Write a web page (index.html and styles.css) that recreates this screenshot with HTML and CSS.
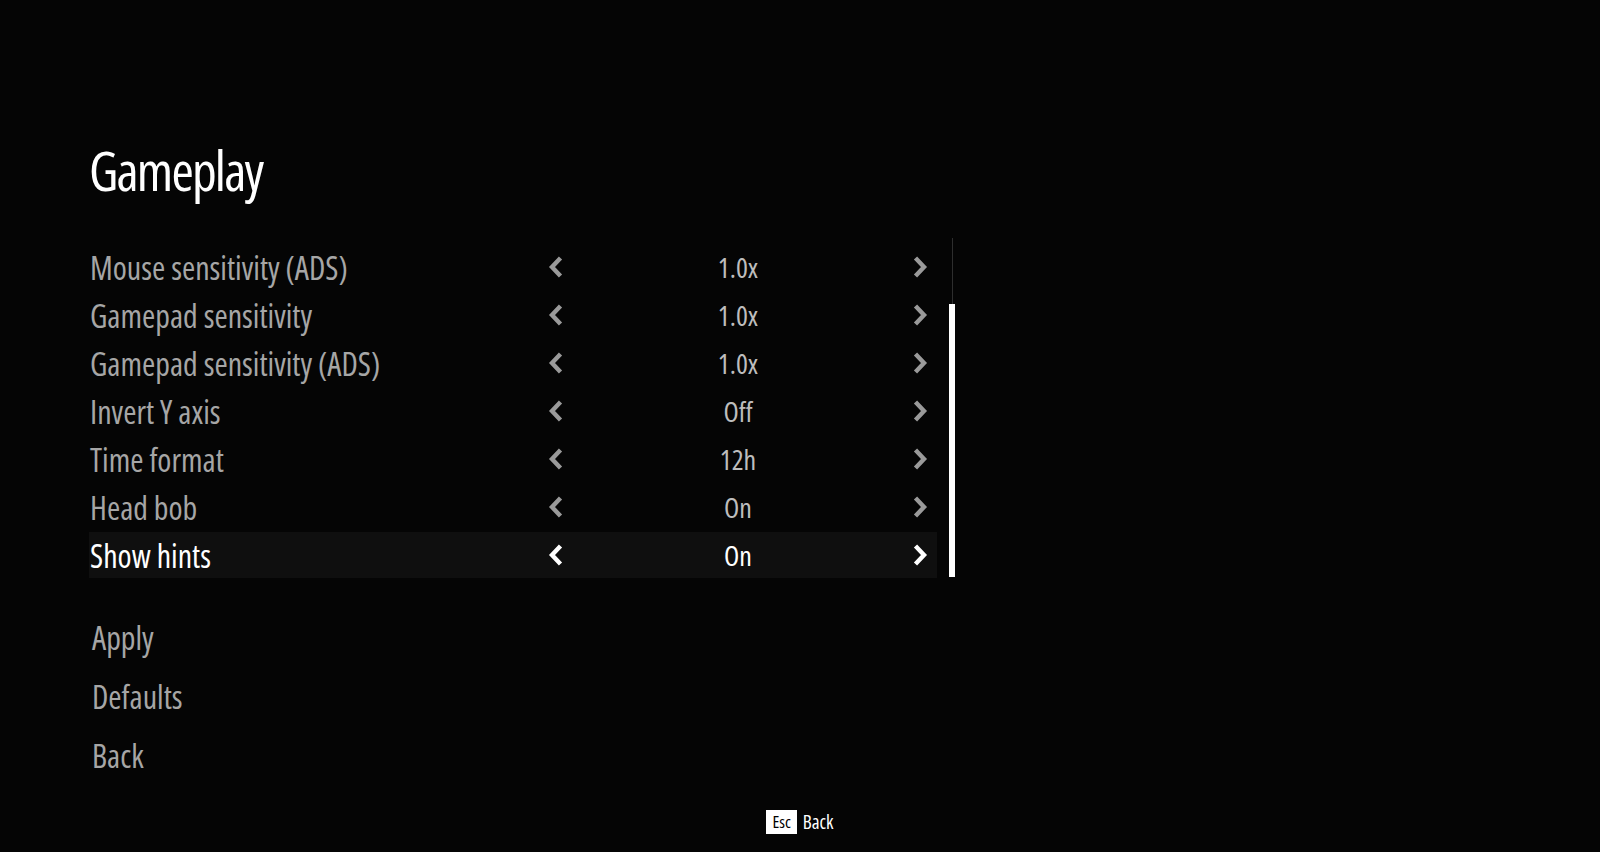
FILE: index.html
```html
<!DOCTYPE html>
<html>
<head>
<meta charset="utf-8">
<link rel="stylesheet" href="styles.css">
</head>
<body>
<div class="page">
  <h1 class="title">Gameplay</h1>
  <div class="settings">
    <div class="list">
      <div class="row"><span class="label">Mouse sensitivity (ADS)</span><span class="chev"><svg viewBox="0 0 18 24" width="18" height="24"><polyline points="13.5,3 5,12 13.5,21"/></svg></span><span class="value">1.0x</span><span class="chev"><svg viewBox="0 0 18 24" width="18" height="24"><polyline points="4.5,3 13,12 4.5,21"/></svg></span></div>
      <div class="row"><span class="label">Gamepad sensitivity</span><span class="chev"><svg viewBox="0 0 18 24" width="18" height="24"><polyline points="13.5,3 5,12 13.5,21"/></svg></span><span class="value">1.0x</span><span class="chev"><svg viewBox="0 0 18 24" width="18" height="24"><polyline points="4.5,3 13,12 4.5,21"/></svg></span></div>
      <div class="row"><span class="label">Gamepad sensitivity (ADS)</span><span class="chev"><svg viewBox="0 0 18 24" width="18" height="24"><polyline points="13.5,3 5,12 13.5,21"/></svg></span><span class="value">1.0x</span><span class="chev"><svg viewBox="0 0 18 24" width="18" height="24"><polyline points="4.5,3 13,12 4.5,21"/></svg></span></div>
      <div class="row"><span class="label">Invert Y axis</span><span class="chev"><svg viewBox="0 0 18 24" width="18" height="24"><polyline points="13.5,3 5,12 13.5,21"/></svg></span><span class="value">Off</span><span class="chev"><svg viewBox="0 0 18 24" width="18" height="24"><polyline points="4.5,3 13,12 4.5,21"/></svg></span></div>
      <div class="row"><span class="label">Time format</span><span class="chev"><svg viewBox="0 0 18 24" width="18" height="24"><polyline points="13.5,3 5,12 13.5,21"/></svg></span><span class="value">12h</span><span class="chev"><svg viewBox="0 0 18 24" width="18" height="24"><polyline points="4.5,3 13,12 4.5,21"/></svg></span></div>
      <div class="row"><span class="label">Head bob</span><span class="chev"><svg viewBox="0 0 18 24" width="18" height="24"><polyline points="13.5,3 5,12 13.5,21"/></svg></span><span class="value">On</span><span class="chev"><svg viewBox="0 0 18 24" width="18" height="24"><polyline points="4.5,3 13,12 4.5,21"/></svg></span></div>
      <div class="row active"><span class="label">Show hints</span><span class="chev"><svg viewBox="0 0 18 24" width="18" height="24"><polyline points="13.5,3 5,12 13.5,21"/></svg></span><span class="value">On</span><span class="chev"><svg viewBox="0 0 18 24" width="18" height="24"><polyline points="4.5,3 13,12 4.5,21"/></svg></span></div>
    </div>
    <div class="scrollbar"><div class="track"></div><div class="thumb"></div></div>
  </div>
  <div class="actions">
    <div class="action">Apply</div>
    <div class="action">Defaults</div>
    <div class="action">Back</div>
  </div>
  <div class="footer"><span class="key">Esc</span><span class="hint">Back</span></div>
</div>
</body>
</html>
```

FILE: styles.css
```css
html, body {
  margin: 0;
  padding: 0;
  background: #050505;
}
body {
  font-family: "Open Sans", "DejaVu Sans Condensed", sans-serif;
  font-stretch: 75%;
  font-weight: 500;
  color: #a6a6a6;
  width: 1600px;
  height: 852px;
  overflow: hidden;
}
.page {
  padding: 138px 0 0 89px;
  display: flex;
  flex-direction: column;
  height: 852px;
  box-sizing: border-box;
}
.title {
  margin: 0;
  font-weight: 500;
  font-size: 54px;
  letter-spacing: -1.8px;
  line-height: 64px;
  color: #ffffff;
}
.settings {
  display: flex;
  align-items: flex-start;
  margin-top: 36px;
}
.list {
  width: 848px;
  padding-top: 6px;
  display: flex;
  flex-direction: column;
  gap: 2px;
}
.row {
  display: flex;
  align-items: center;
  height: 46px;
  padding-right: 5px;
  font-size: 32px;
  box-sizing: border-box;
}
.label {
  width: 455px;
  padding-left: 1px;
  box-sizing: border-box;
}
.chev {
  width: 24px;
  display: flex;
  justify-content: center;
}
.chev svg polyline {
  fill: none;
  stroke: #9a9a9a;
  stroke-width: 4.4;
  stroke-linejoin: miter;
  stroke-linecap: butt;
}
.value {
  flex: 1;
  text-align: center;
  color: #bdbdbd;
  font-size: 28px;
}
.row.active {
  background: #0f0f0f;
  color: #ffffff;
}
.row.active .value {
  color: #ffffff;
}
.row.active .chev svg polyline {
  stroke: #ffffff;
}
.scrollbar {
  position: relative;
  width: 6px;
  height: 339px;
  margin-left: 12px;
}
.track {
  position: absolute;
  left: 3px;
  top: 0;
  width: 1px;
  height: 100%;
  background: #2e2e2e;
}
.thumb {
  position: absolute;
  left: 0;
  bottom: 0;
  width: 6px;
  height: 273px;
  background: #ffffff;
}
.actions {
  margin-top: 30px;
  padding-left: 3px;
  display: flex;
  flex-direction: column;
}
.action {
  height: 59px;
  line-height: 59px;
  font-size: 32px;
}
.footer {
  margin-top: 24px;
  margin-left: -89px;
  display: flex;
  justify-content: center;
  align-items: center;
  gap: 6px;
}
.key {
  background: #ffffff;
  color: #000000;
  font-size: 17px;
  padding: 0 6px;
  height: 24px;
  line-height: 24px;
}
.hint {
  color: #ffffff;
  font-size: 19px;
}
```
